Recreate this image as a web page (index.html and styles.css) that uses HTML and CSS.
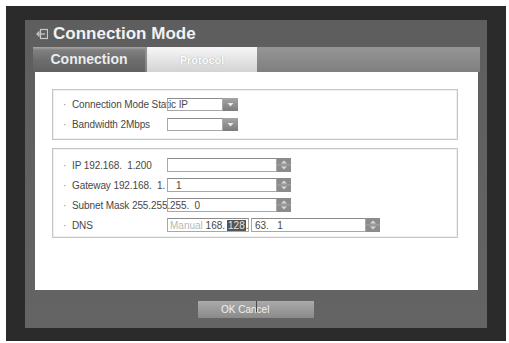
FILE: index.html
```html
<!DOCTYPE html>
<html>
<head>
<meta charset="utf-8">
<link rel="stylesheet" href="styles.css">
</head>
<body>
<div class="frame">
  <div class="panel">
    <div class="title">
      <svg class="title-icon" width="12" height="12" viewBox="0 0 12 12">
        <rect x="4.5" y="1.5" width="7" height="9" fill="none" stroke="#c8c8c8" stroke-width="1.2"/>
        <line x1="9" y1="6" x2="1" y2="6" stroke="#c8c8c8" stroke-width="1.3"/>
        <polyline points="3.5,3.5 1,6 3.5,8.5" fill="none" stroke="#c8c8c8" stroke-width="1.3"/>
      </svg>
      <span>Connection Mode</span>
    </div>
    <div class="tabs">
      <div class="tab tab-active">Connection</div>
      <div class="tab tab-inactive">Protocol</div>
    </div>
    <div class="content">
      <div class="group group-mode">
        <div class="row">
          <span class="bullet">·</span><span class="label">Connection Mode Static IP</span>
          <div class="select"><div class="field"></div><svg class="arrow" width="15" height="13" viewBox="0 0 15 13"><defs><linearGradient id="ga" x1="0" y1="0" x2="0" y2="1"><stop offset="0" stop-color="#a5a5a5"/><stop offset="1" stop-color="#7c7c7c"/></linearGradient></defs><rect width="15" height="13" fill="url(#ga)"/><polygon points="4.5,5 10.5,5 7.5,8.5" fill="#eaeaea"/></svg></div>
        </div>
        <div class="row">
          <span class="bullet">·</span><span class="label">Bandwidth 2Mbps</span>
          <div class="select"><div class="field"></div><svg class="arrow" width="15" height="13" viewBox="0 0 15 13"><rect width="15" height="13" fill="url(#ga)"/><polygon points="4.5,5 10.5,5 7.5,8.5" fill="#eaeaea"/></svg></div>
        </div>
      </div>
      <div class="group group-net">
        <div class="row">
          <span class="bullet">·</span><span class="label">IP 192.168.  1.200</span>
          <div class="spin"><div class="field field-ip"></div><svg class="spinner" width="14" height="14" viewBox="0 0 14 14"><rect width="14" height="14" fill="#8c8c8c"/><rect y="6.5" width="14" height="1" fill="#a8a8a8"/><polygon points="4,5.5 10,5.5 7,2.5" fill="#d8d8d8"/><polygon points="4,8.5 10,8.5 7,11.5" fill="#d8d8d8"/></svg></div>
        </div>
        <div class="row">
          <span class="bullet">·</span><span class="label">Gateway 192.168.  1.</span>
          <div class="spin"><div class="field field-ip"><span class="val val-gw">1</span></div><svg class="spinner" width="14" height="14" viewBox="0 0 14 14"><rect width="14" height="14" fill="#8c8c8c"/><rect y="6.5" width="14" height="1" fill="#a8a8a8"/><polygon points="4,5.5 10,5.5 7,2.5" fill="#d8d8d8"/><polygon points="4,8.5 10,8.5 7,11.5" fill="#d8d8d8"/></svg></div>
        </div>
        <div class="row">
          <span class="bullet">·</span><span class="label">Subnet Mask 255.255.255.  0</span>
          <div class="spin"><div class="field field-ip"></div><svg class="spinner" width="14" height="14" viewBox="0 0 14 14"><rect width="14" height="14" fill="#8c8c8c"/><rect y="6.5" width="14" height="1" fill="#a8a8a8"/><polygon points="4,5.5 10,5.5 7,2.5" fill="#d8d8d8"/><polygon points="4,8.5 10,8.5 7,11.5" fill="#d8d8d8"/></svg></div>
        </div>
        <div class="row">
          <span class="bullet">·</span><span class="label">DNS</span>
          <div class="field field-dns1"><span class="muted">Manual</span> 168.<span class="hl">128</span>.</div>
          <div class="spin"><div class="field field-dns2"><span class="val">63.   1</span></div><svg class="spinner" width="14" height="14" viewBox="0 0 14 14"><rect width="14" height="14" fill="#8c8c8c"/><rect y="6.5" width="14" height="1" fill="#a8a8a8"/><polygon points="4,5.5 10,5.5 7,2.5" fill="#d8d8d8"/><polygon points="4,8.5 10,8.5 7,11.5" fill="#d8d8d8"/></svg></div>
        </div>
      </div>
    </div>
    <div class="footer">
      <div class="btn">OK Cancel</div>
    </div>
  </div>
</div>
</body>
</html>
```
FILE: styles.css
```css
html, body {
  margin: 0;
  background: #ffffff;
  font-family: "Liberation Sans", Arial, sans-serif;
}

.frame {
  margin: 6px 0 0 6px;
  width: 500px;
  height: 335px;
  box-sizing: border-box;
  padding: 14px 19px 13px 19px;
  background: #2b2b2b;
}

.panel {
  width: 462px;
  height: 308px;
  display: flex;
  flex-direction: column;
  background: linear-gradient(#5e5e5e, #646464);
}

.title {
  height: 27px;
  flex: none;
  display: flex;
  align-items: center;
  gap: 5px;
  padding-left: 11px;
  color: #f2f2f2;
  font-size: 17px;
  font-weight: bold;
}

.title-icon {
  flex: none;
}

.tabs {
  height: 25px;
  flex: none;
  margin: 0 7px 0 8px;
  display: flex;
  background: linear-gradient(#969696, #7f7f7f);
}

.tab {
  text-align: center;
  font-weight: bold;
}

.tab-active {
  width: 112px;
  line-height: 25px;
  font-size: 14px;
  color: #ececec;
  background: linear-gradient(#a8a8a8 0, #808080 3px, #6e6e6e 50%, #616161 100%);
}

.tab-inactive {
  width: 110px;
  margin-left: 2px;
  box-sizing: border-box;
  padding-top: 2px;
  line-height: 23px;
  font-size: 11px;
  color: #ffffff;
  text-shadow: 0 0 1px #8e8e8e;
  background: linear-gradient(#f6f6f6, #d3d3d3);
}

.content {
  height: 218px;
  flex: none;
  margin: 0 9px 0 10px;
  box-sizing: border-box;
  padding: 17px 20px 0 17px;
  background: #ffffff;
  display: flex;
  flex-direction: column;
  gap: 8px;
}

.group {
  border: 1px solid #c6c6c6;
  box-shadow: inset 0 0 0 1px #f0f0f0;
  display: flex;
  flex-direction: column;
  padding: 0 10px;
}

.group-mode {
  padding-top: 8px;
  padding-bottom: 8px;
  gap: 7px;
}

.group-mode .row {
  height: 13px;
}

.group-net {
  padding-top: 9px;
  padding-bottom: 5px;
  gap: 6px;
}

.group-net .row {
  height: 14px;
}

.row {
  display: flex;
  align-items: center;
  font-size: 10px;
  color: #474747;
}

.bullet {
  width: 9px;
  flex: none;
  color: #8a8a8a;
}

.label {
  width: 95px;
  flex: none;
  white-space: pre;
  letter-spacing: -0.1px;
}

.select, .spin {
  display: flex;
  height: 100%;
  flex: none;
}

.field {
  box-sizing: border-box;
  height: 100%;
  border: 1px solid #a8a8a8;
  border-top-color: #8c8c8c;
  display: flex;
  align-items: center;
  white-space: pre;
}

.select .field {
  width: 56px;
}

.field-ip {
  width: 110px;
}

.val-gw {
  padding-left: 8px;
}

.field-dns1 {
  width: 82px;
  margin-right: 2px;
  padding-left: 2px;
  flex: none;
}

.field-dns2 {
  width: 115px;
  padding-left: 3px;
}

.muted {
  color: #b8b8b8;
}

.hl {
  background: #555555;
  color: #e6e6e6;
  padding: 0 1px;
  margin-left: 2px;
}

.arrow, .spinner {
  flex: none;
  display: block;
}

.footer {
  flex: 1;
  display: flex;
  justify-content: center;
  padding-top: 11px;
}

.btn {
  position: relative;
  width: 116px;
  height: 17px;
  box-sizing: border-box;
  padding-left: 23px;
  line-height: 17px;
  font-size: 10px;
  color: #f0f0f0;
  background: linear-gradient(#ababab, #8a8a8a);
}

.btn::after {
  content: "";
  position: absolute;
  left: 58px;
  top: 0;
  width: 1px;
  height: 11px;
  background: #4a4a4a;
}
```
